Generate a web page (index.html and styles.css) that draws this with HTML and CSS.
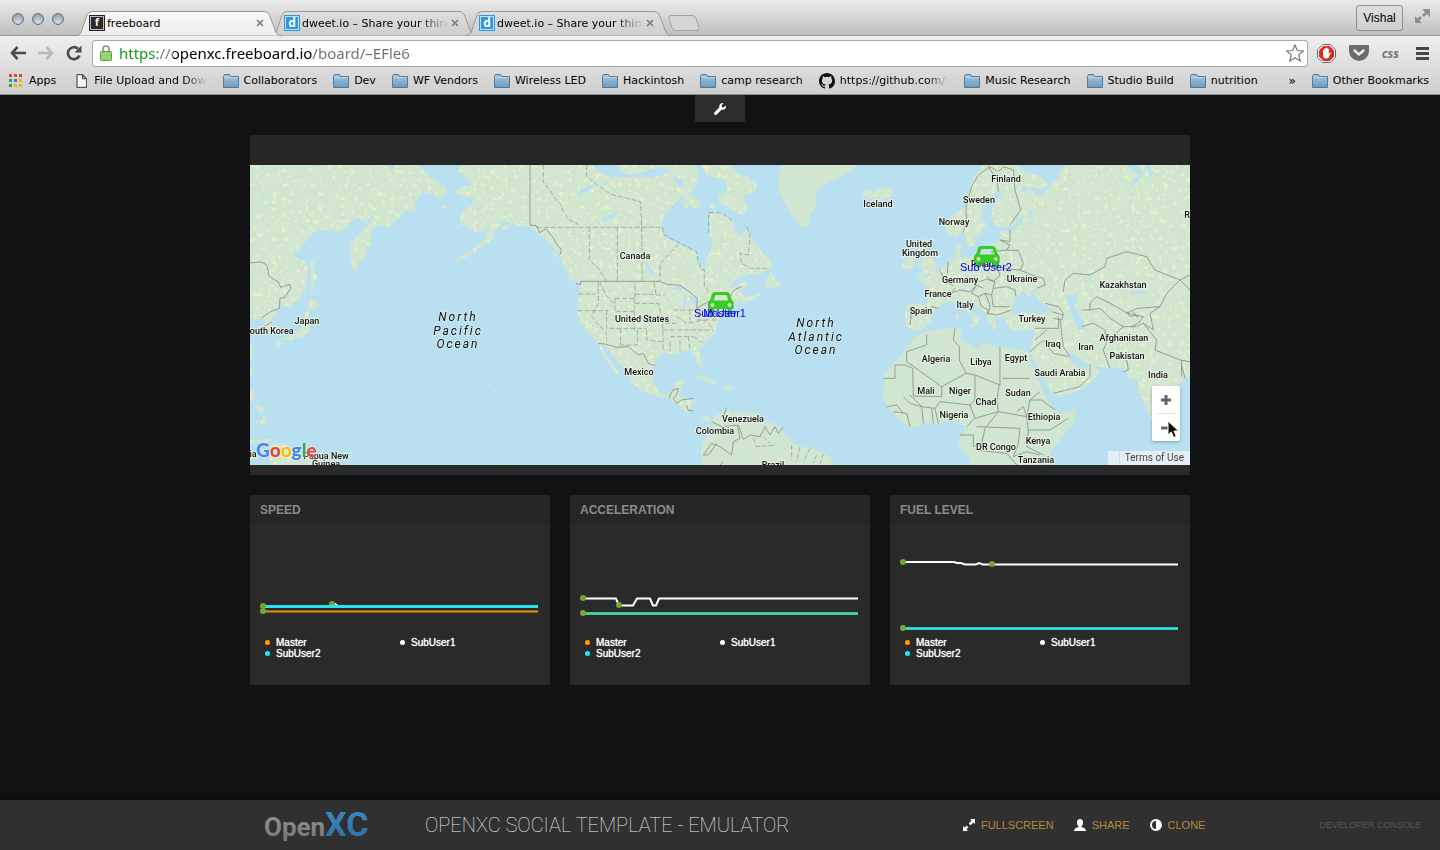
FILE: index.html
```html
<!DOCTYPE html>
<html lang="en">
<head>
<meta charset="utf-8">
<title>freeboard</title>
<link rel="stylesheet" href="styles.css">
</head>
<body>
<svg class="defs" width="0" height="0" aria-hidden="true">
  <defs>
    <linearGradient id="folderFill" x1="0" y1="0" x2="0" y2="1"><stop offset="0" stop-color="#a9c8de"/><stop offset="1" stop-color="#6c9cc0"/></linearGradient>
    <linearGradient id="tabActive" x1="0" y1="0" x2="0" y2="1"><stop offset="0" stop-color="#f7f7f7"/><stop offset="1" stop-color="#ededed"/></linearGradient>
    <linearGradient id="tabIdle" x1="0" y1="0" x2="0" y2="1"><stop offset="0" stop-color="#dedede"/><stop offset="1" stop-color="#cfcfcf"/></linearGradient>
    <linearGradient id="xcFill" x1="0" y1="0" x2="0" y2="1"><stop offset="0" stop-color="#3d8bc9"/><stop offset="1" stop-color="#2b6ca3"/></linearGradient>
    <linearGradient id="openFill" x1="0" y1="0" x2="0" y2="1"><stop offset="0" stop-color="#979797"/><stop offset="1" stop-color="#747474"/></linearGradient>
    <symbol id="folder" viewBox="0 0 16 14"><path d="M.5 2.5 1.5.5h5l1 2h8v11H.5z" fill="url(#folderFill)" stroke="#54799a"/><path d="M1 3.5h14" stroke="#bdd6e8"/></symbol>
    <symbol id="tabshape" viewBox="0 0 208 25"><path d="M0 24.500C5 24.500 6 22 7 19L12 4Q13.500.500 17 .500H189Q193 .500 194.500 4L200 19C201 22 202 24.500 207 24.500" stroke="#9a9a9a"/></symbol>
    <symbol id="close" viewBox="0 0 8 8"><path d="m1 1 6 6M7 1 1 7" stroke="#7b7b7b" stroke-width="1.600"/></symbol>
    <symbol id="car" viewBox="0 0 26 22"><path fill-rule="evenodd" d="M7 0h12q2 0 2.700 2l2 6q2 1 2 3v6h-2v3q0 2-2 2t-2-2v-3H6v3q0 2-2 2t-2-2v-3H0v-6q0-2 2-3l2-6q1-2 3-2zM7.300 3 5.700 8.500h14.600L18.700 3zM4.500 11a2 2 0 1 0 .1 0zm17 0a2 2 0 1 0 .1 0z" fill="#37cb25"/></symbol>
    <filter id="terrain" x="0" y="0" width="100%" height="100%" color-interpolation-filters="sRGB">
      <feTurbulence type="fractalNoise" baseFrequency="0.22" numOctaves="4" seed="8" result="n"/>
      <feColorMatrix in="n" type="matrix" values="0 0 0 0 .922  0 0 0 0 .933  0 0 0 0 .780  8 0 0 0 -4.700" result="s"/>
      <feComposite in="s" in2="SourceAlpha" operator="in" result="c"/>
      <feMerge><feMergeNode in="SourceGraphic"/><feMergeNode in="c"/></feMerge>
    </filter>
  </defs>
</svg>

<header class="browser">
  <div class="titlebar">
    <div class="lights"><i></i><i></i><i></i></div>
    <nav class="tabs">
      <div class="tab active">
        <svg class="shape"><use href="#tabshape" fill="url(#tabActive)"/></svg>
        <span class="fav dark">f</span><span class="tabname">freeboard</span>
        <button class="x" aria-label="Close tab"><svg width="8" height="8"><use href="#close"/></svg></button>
      </div>
      <div class="tab">
        <svg class="shape"><use href="#tabshape" fill="url(#tabIdle)"/></svg>
        <span class="fav">d</span><span class="tabname faded">dweet.io – Share your thing</span>
        <button class="x" aria-label="Close tab"><svg width="8" height="8"><use href="#close"/></svg></button>
      </div>
      <div class="tab">
        <svg class="shape"><use href="#tabshape" fill="url(#tabIdle)"/></svg>
        <span class="fav">d</span><span class="tabname faded">dweet.io – Share your thing</span>
        <button class="x" aria-label="Close tab"><svg width="8" height="8"><use href="#close"/></svg></button>
      </div>
      <button class="newtab" aria-label="New tab"><svg width="32" height="16" viewBox="0 0 32 16"><path d="M3 .500H24q3 0 4 3l3 9q1 3-2 3H8q-3 0-4-3L.800 3.500Q0 .500 3 .500z" fill="#d6d6d6" stroke="#a2a2a2"/></svg></button>
    </nav>
    <button class="user">Vishal</button>
    <button class="plain expand" aria-label="Full screen"><svg width="15" height="15" viewBox="0 0 15 15" fill="#8d8d8d"><path d="M7 0h8v8l-3-3-3 3-2-2 3-3zM0 7l2.500 2.500L5 7l2 2-2.500 2.500L7 14H0z"/></svg></button>
  </div>
  <div class="toolbar">
    <button class="plain" aria-label="Back"><svg width="16" height="14" viewBox="0 0 16 14" fill="none" stroke="#4b4b4b" stroke-width="2.600"><path d="M7.500 1 2 7l5.500 6M2 7h14"/></svg></button>
    <button class="plain" aria-label="Forward"><svg width="16" height="14" viewBox="0 0 16 14" fill="none" stroke="#b9b9b9" stroke-width="2.600"><path d="M8.500 1 14 7l-5.500 6M14 7H0"/></svg></button>
    <button class="plain" aria-label="Reload"><svg width="16" height="16" viewBox="0 0 16 16"><path d="M13.500 10.500A6 6 0 1 1 12 3.700" fill="none" stroke="#4b4b4b" stroke-width="2.600"/><path d="M15.500.500v7h-7z" fill="#4b4b4b"/></svg></button>
    <div class="omnibox">
      <svg width="12" height="16" viewBox="0 0 12 16"><path d="M3 8V4q0-3 3-3t3 3v4" fill="none" stroke="#8c8c8c" stroke-width="1.600"/><rect x=".5" y="6.500" width="11" height="9" rx="1" fill="#8fd06a" stroke="#5a9c3e"/><path d="M1 9h10M1 12h10" stroke="#aee08f"/></svg>
      <input class="url" type="text" aria-label="Address" value="https://openxc.freeboard.io/board/–EFle6">
      <button class="plain" aria-label="Bookmark"><svg width="18" height="18" viewBox="0 0 18 18"><path d="m9 1 2.300 5.500 6 .500-4.600 3.900L14.200 17 9 13.700 3.800 17l1.500-6.100L.700 7l6-.500z" fill="#fff" stroke="#777" stroke-width="1.200"/></svg></button>
    </div>
    <div class="extensions">
      <button class="plain" aria-label="Ad blocker"><svg width="19" height="19" viewBox="0 0 19 19"><path d="M5.800.500h7.400l5.300 5.300v7.400l-5.300 5.300H5.800L.500 13.200V5.800z" fill="#fff" stroke="#666"/><path d="M6.400 2h6.200L17 6.400v6.200L12.600 17H6.400L2 12.600V6.400z" fill="#e0281a"/><path d="M6 9V6q.7-1 1.400 0V4.500q.7-1 1.500 0V4q.8-.800 1.500 0v1q.8-.800 1.400 0v5l1-1.500q1-.300 1 .600L12 13q-1 1.500-3 1.500T6.300 13z" fill="#fff"/></svg></button>
      <button class="plain" aria-label="Pocket"><svg width="20" height="17" viewBox="0 0 20 17"><path d="M0 1q0-1 1-1h18q1 0 1 1v5a10 10 0 0 1-20 0z" fill="#6b6b6b"/><path d="m5.500 5.500 4.500 4 4.500-4" fill="none" stroke="#eee" stroke-width="2.400" stroke-linecap="round"/></svg></button>
      <button class="plain css">css</button>
      <button class="plain" aria-label="Menu"><svg width="13" height="13" viewBox="0 0 13 13"><path d="M0 1.500h13M0 6.500h13M0 11.500h13" stroke="#474747" stroke-width="3"/></svg></button>
    </div>
  </div>
  <nav class="bookmarks">
    <a href="#" class="apps"><svg width="13" height="13" viewBox="0 0 13 13"><path d="M0 0h3v3H0zM5 0h3v3H5zM10 0h3v3h-3z" fill="#ea4335"/><path d="M0 5h3v3H0zM0 10h3v3H0z" fill="#2da05a"/><path d="M5 5h3v3H5z" fill="#2f7de1"/><path d="M10 5h3v3h-3zM5 10h3v3H5zM10 10h3v3h-3z" fill="#f5b400"/></svg>Apps</a>
    <a href="#" class="page"><svg width="11" height="14" viewBox="0 0 11 14"><path d="M1 .700h5.500l4 4v8.600H1zM6.500.700v4h4" fill="#f6f6f6" stroke="#555" stroke-width="1.200"/></svg><span class="faded">File Upload and Dow</span></a>
    <a href="#"><svg width="16" height="14"><use href="#folder"/></svg>Collaborators</a>
    <a href="#"><svg width="16" height="14"><use href="#folder"/></svg>Dev</a>
    <a href="#"><svg width="16" height="14"><use href="#folder"/></svg>WF Vendors</a>
    <a href="#"><svg width="16" height="14"><use href="#folder"/></svg>Wireless LED</a>
    <a href="#"><svg width="16" height="14"><use href="#folder"/></svg>Hackintosh</a>
    <a href="#"><svg width="16" height="14"><use href="#folder"/></svg>camp research</a>
    <a href="#"><svg width="16" height="16" viewBox="0 0 16 16"><path fill="#111" d="M8 0C3.580 0 0 3.580 0 8c0 3.540 2.290 6.530 5.470 7.590.4.070.55-.170.550-.380 0-.190-.010-.820-.010-1.490-2.010.370-2.530-.490-2.690-.940-.090-.230-.480-.940-.820-1.130-.280-.150-.680-.520-.010-.530.630-.010 1.080.580 1.230.820.720 1.210 1.870.870 2.330.660.070-.520.280-.870.510-1.070-1.780-.200-3.640-.890-3.640-3.950 0-.870.310-1.590.820-2.150-.080-.200-.360-1.020.080-2.120 0 0 .670-.210 2.200.820a7.600 7.600 0 0 1 4 0c1.530-1.040 2.200-.820 2.200-.820.440 1.100.160 1.920.080 2.120.510.560.820 1.270.820 2.150 0 3.070-1.870 3.750-3.650 3.950.290.250.540.730.540 1.480 0 1.070-.010 1.930-.010 2.200 0 .210.150.460.550.380A8 8 0 0 0 16 8c0-4.420-3.580-8-8-8z"/></svg><span class="faded">https://github.com/i</span></a>
    <a href="#"><svg width="16" height="14"><use href="#folder"/></svg>Music Research</a>
    <a href="#"><svg width="16" height="14"><use href="#folder"/></svg>Studio Build</a>
    <a href="#"><svg width="16" height="14"><use href="#folder"/></svg>nutrition</a>
    <button class="plain more" aria-label="More bookmarks">»</button>
    <a href="#"><svg width="16" height="14"><use href="#folder"/></svg>Other Bookmarks</a>
  </nav>
</header>

<main class="board">
  <button class="settings" aria-label="Edit board"><svg width="12" height="12" viewBox="0 0 12 12"><path d="M0 9.700 5.300 4.500Q4.800 2 6.500.700 8 -.300 9.600.200L7.600 2.300l.4 1.700 1.700.400 2-2q.7 1.700-.4 3.200-1.400 1.600-3.800 1.100L2.300 12Q1.500 12.300.600 11.400-.300 10.500 0 9.700z" fill="#fff"/></svg></button>

  <section class="panel mappanel">
    <div class="panelhead"></div>
    <div class="map">
      <svg class="world" viewBox="0 0 940 300" preserveAspectRatio="xMidYMid slice" role="img" aria-label="World map">
        <g class="land" filter="url(#terrain)">
          <g transform="translate(0 -35) scale(.33333)">
            <path d="M0 100H498L520 118 545 145 562 155 585 168 592 182 570 208 545 190 530 192 515 175 508 202 495 214 500 247 470 240 430 278 417 292 400 284 376 290 365 310 362 345 350 352 348 382 325 397 318 423 308 420 300 370 300 340 320 318 345 295 365 270 375 245 350 275 338 275 328 260 300 275 275 308 240 298 190 305 170 330 150 355 130 370 135 385 160 390 172 410 170 460 160 490 140 515 110 530 95 528 75 545 84 553 60 572 68 600 52 612 45 590 45 570 30 565 10 575 0 555z"/>
            <path d="M180 395 192 395 195 430 203 445 190 450 190 485 182 485 183 440zM180 500 195 512 211 522 195 530 190 540 172 536 180 520zM165 540 178 547 175 575 180 598 165 617 130 628 100 633 95 625 135 612 155 592 162 570zM80 630 96 635 90 652 82 652zM0 640 10 655 5 685 0 690zM0 715 12 712 3 740 0 742zM0 775 10 778 16 800 6 815 0 812zM10 822 22 824 38 830 42 845 30 848 18 835zM15 868 30 872 42 855 50 880 36 886 28 875 18 880zM0 930 65 928 60 935 0 940zM60 940 100 942 140 962 175 978 195 1010H60zM575 228 600 230 592 237 580 234zM616 287 630 286 625 295zM712 760 722 765 715 771z"/>
            <path d="M844 100H636L625 125 650 145 662 165 645 170 632 174 610 186 620 192 645 200 655 207 668 202 670 225 640 240 630 260 636 286 655 290 665 305 690 305 715 297 708 322 680 350 640 376 613 393 617 397 650 380 700 348 727 326 735 305 752 280 765 272 780 278 775 295 757 300 753 290 790 278 805 288 844 292z"/>
          </g>
          <g transform="translate(280 -5) scale(.33333)">
            <path d="M0 10H482L505 30 500 60 490 90 455 110 430 135 402 165 395 205 400 225 430 245 470 265 500 275 503 300 515 325 526 325 530 290 545 265 548 235 533 225 540 195 535 160 575 158 610 185 615 215 635 228 650 200 665 235 690 265 705 285 722 300 726 325 690 342 650 345 620 355 600 385 622 375 645 365 657 368 640 385 635 400 650 412 690 400 685 412 650 425 640 432 630 420 615 434 598 436 588 442 573 465 565 485 562 500 553 520 540 537 520 555 505 570 512 590 520 612 513 622 500 605 495 582 480 572 450 574 440 585 400 578 375 600 368 630 370 665 385 695 410 705 425 695 435 665 460 660 455 685 445 710 480 715 492 725 475 750 480 768 500 778 530 768 547 782 538 790 520 780 495 776 465 755 440 730 415 715 385 710 330 690 305 670 300 650 280 620 255 595 230 555 216 555 225 580 245 605 268 640 260 642 235 610 222 590 208 560 200 545 165 510 155 490 142 460 145 420 150 375 120 350 100 315 88 280 60 250 30 220 0 202z"/>
            <path d="M515 10H600L622 40 650 50 682 75 672 98 640 108 652 140 638 166 600 145 575 132 560 110 592 92 588 62 540 50 518 30zM458 98 490 106 515 128 500 152 478 138 462 148zM540 130 555 133 552 145 540 142zM722 335 735 355 750 372 750 390 735 380 702 385 712 355zM485 650 510 645 540 655 562 672 535 668 510 655zM576 680 592 674 616 685 590 690zM540 685 552 686 545 690zM628 683 640 684 635 688zM72 270 82 280 80 298 70 285zM110 335 150 362 148 375 120 355z"/>
          </g>
          <g transform="translate(610 -5) scale(.33333)">
            <path d="M1000 10H372L345 45 330 80 318 140 270 170 255 190 262 220 288 232 308 215 318 230 324 262 345 255 345 235 365 220 378 190 363 170 370 135 395 110 418 88 422 108 398 140 395 170 408 200 440 203 490 185 460 210 415 217 422 240 395 250 395 275 350 285 320 292 302 292 300 265 305 245 285 255 287 290 265 305 240 330 200 350 172 350 182 365 207 385 205 415 200 435 145 430 135 450 138 495 165 514 190 505 212 485 218 460 240 435 265 425 290 428 310 445 335 470 342 490 322 498 340 505 352 490 357 475 325 450 313 428 325 415 350 440 375 460 385 485 400 512 412 500 405 475 432 468 440 490 455 512 490 510 525 507 520 540 508 575 525 605 555 660 578 705 600 710 660 690 700 660 720 635 695 610 680 625 655 625 632 600 622 583 640 580 665 600 700 615 740 622 790 625 800 640 815 662 832 655 835 690 872 778 880 780 905 740 940 690 975 655 1000 650z"/>
            <path d="M180 238 200 238 195 265 215 290 232 320 222 340 175 347 190 330 175 315 190 295 175 270zM135 290 160 288 166 315 145 332 125 325zM20 90 40 95 60 85 90 80 98 100 85 115 50 125 20 115 5 100zM285 462 295 462 296 482 287 482zM287 440 294 440 293 455zM405 525 435 526 420 531zM490 527 508 522 497 533zM150 160 160 165 152 166z"/>
          </g>
        </g>
        <g class="land">
          <path transform="translate(280 -5) scale(.33333)" d="M757 10 745 60 750 100 780 160 808 198 832 203 840 165 856 140 860 95 890 70 935 50 990 10z"/>
          <path transform="translate(280 -5) scale(.33333)" d="M545 775 565 762 592 742 600 755 640 758 680 760 700 780 740 795 765 820 788 850 840 865 880 878 907 898 905 920H520L512 880 520 845 540 820 547 795z"/>
          <path transform="translate(610 -5) scale(.33333)" d="M195 515 285 503 305 510 300 535 350 565 372 550 425 560 490 572 505 575 515 612 538 665 560 715 585 748 600 760 650 745 640 790 600 840 568 880 555 920H335L325 890 295 860 300 830 320 800 290 790 270 775 235 792 200 790 150 806 120 780 90 750 66 710 75 680 70 650 110 600 130 575 165 530z"/>
        </g>
        <g class="lakes">
          <g transform="translate(0 -35) scale(.33333)"><path d="M400 105H440L425 118zM180 104H215L205 110z"/><path class="river" d="M25 160Q30 200 75 232"/></g>
          <g transform="translate(280 -5) scale(.33333)"><path d="M185 15 260 15 290 45 330 40 395 20 420 35 380 50 310 52 240 50 205 35zM430 50 460 60 455 90 440 70zM140 95 165 85 190 70 197 75 170 95 150 108zM212 180 235 165 270 152 250 170 220 186zM345 305 360 318 378 345 365 345 350 325zM425 385 450 375 475 385 450 393 430 388zM460 410 470 402 465 448 457 445zM478 405 500 415 498 432 485 430zM500 450 520 440 505 455zM520 436 535 430 530 438zM325 190 340 195 330 200zM215 60 235 70 225 75z"/></g>
          <g transform="translate(610 -5) scale(.33333)"><path d="M470 10H625L605 30 590 60 566 82 545 108 525 103 515 85 480 95 488 78 545 88 566 72 540 48 500 38 478 25zM800 10H830L850 35 835 65 812 80 820 60 840 45 815 30zM855 10 870 10 878 55 870 50zM455 445 470 408 490 392 505 410 520 400 540 425 577 450 540 462 490 455 460 467zM505 395 535 388 520 402zM620 408 650 400 652 420 642 440 667 478 675 505 655 512 642 482 630 455zM685 408 705 405 700 415zM465 170 490 175 485 195 470 190zM505 150 515 150 520 175 508 170zM800 395 850 393 870 400 820 403z"/></g>
        </g>
        <g class="borders">
          <g transform="translate(0 -35) scale(.33333)"><path d="M0 398H15Q40 390 52 410L58 440 85 456 92 472 120 463 122 475 105 502 90 505 88 535 62 545 32 565M45 588 66 576"/><path class="sea" d="M595 105 602 150 600 190 560 225 500 290 423 400 508 468V948H680V910H653V880H712L762 1005"/></g>
          <g transform="translate(280 -5) scale(.33333)">
            <path d="M0 10V196H18L30 218 48 206 70 235 85 260 94 268 90 285M138 370 152 375V364H390L410 373 450 376 478 395 502 415 500 445 535 425M600 410 612 390 635 380M205 550 230 553 260 562 295 560 325 585 340 580 355 610 375 617M417 715 428 690 445 685 440 705 430 715 440 730 455 720 490 715M470 735 475 752 490 752M580 770 590 742M545 785 575 800 622 795 630 835 610 845 605 885 570 860 545 850 520 885M625 795 640 838 660 825 690 830 705 800 720 825 735 800 745 820 760 800M570 915 580 905M520 885 535 885 560 850"/>
            <path class="state" d="M40 15V68L60 90 75 115 90 130 100 155 120 182 140 188 145 202M20 202H397M170 15V50L240 102 332 125 335 202M178 202V300L205 325 230 364M262 202V364M335 202 337 364M445 252 390 312V364M397 202 402 225 500 275 503 300 515 328 523 330V375L535 395M536 220V158H575L610 185M650 200 660 225 655 285 630 280 635 310 660 325H715M205 366V430L185 470 230 520V545M145 402H195M143 452H235M210 366 228 405 255 435M255 415H315V366M315 403H378L372 366M255 415V455H315M313 415V510M230 450V505H350M272 505V558M322 510V555H275M315 430H385L395 470M313 475H398M350 510V540L400 545M398 510H550M397 470 400 575M378 405H405M405 490H440M420 545V575M450 540V573M475 530 480 570M420 530H490M440 470 470 490 520 480 550 505M505 455V480H560M480 450V480M530 450 560 452M490 530 520 550M430 450H500M785 855V900M810 860 800 905M840 865 820 905M860 885 850 910M880 880 870 912M670 835 680 860 740 855M700 830 720 850"/>
          </g>
          <g transform="translate(610 -5) scale(.33333)">
            <path d="M318 140 335 80 355 45 390 20 415 35 430 20 460 30 465 90 482 150 450 195M415 95 412 60 385 20M318 140 320 190 308 218M150 495 155 455 145 450M212 440 235 445M240 330 255 365 280 378M265 305 262 340M285 385 270 400 300 390 330 395 350 375 370 385M320 350 355 365 380 358 405 365M395 275 410 320 420 345 400 365 380 350M395 275 440 270 450 255 420 240 450 245 450 210M440 270 475 272 490 310 480 330 425 325M405 365 400 385 440 380 465 390 468 410M350 375 335 400 355 410 375 400 395 405 400 385M355 410 365 440 385 450 380 465M375 400 390 435 385 460 410 465 440 455 455 450M395 405 400 440 450 440M480 330 515 345 550 355 555 375 530 385M555 430 595 440 610 460 605 480 580 475M575 455 610 465M610 395 615 360 640 340 690 345 735 320 740 295 800 275 860 290 885 330 960 360 920 400 900 440 830 445 800 460 770 440 710 410 690 430V450H665M690 450 720 445 750 475 790 500M665 500 700 490 735 510 740 545 730 570 740 600 750 625M600 480 610 560 630 590M525 505H595V470M525 540 560 510M510 575 550 540 580 580 625 590M740 545 790 500 830 500 850 490M750 580 800 600 805 630 790 635M800 460 850 470 835 490 815 500M850 490 890 540 885 570 960 600 990 605M900 440 870 460 880 510 850 490M960 360 990 390M960 360 990 345M580 700 660 680 690 650 690 615M965 600V650M975 655 965 615"/>
            <path d="M285 505 280 540 298 560V600L318 640 345 645 420 675V560M428 655H510M200 525V555L140 575 140 605 245 680 318 640M245 680V710L160 708 158 625 135 615H105V655H70M345 645V720L330 735 240 725 225 745 185 740 150 705M418 675 410 720 415 755 500 770 510 720 540 695M330 735 345 775 320 800M345 775 415 755M375 805 415 755M510 720 545 720 585 750M500 770 505 810 570 810 625 775M350 800 480 805 475 850 460 890M300 825H340V860L365 850 375 805M460 890 500 875 540 885M505 810 500 860 550 885M345 870 440 880 470 915M80 740 110 735 130 760M100 755 140 760 150 800M185 740 190 790M215 745 220 790M225 745 235 790M130 710 150 730 185 740M470 755 490 740 500 770M800 455 810 470 830 465M820 455 835 475"/>
          </g>
        </g>
        <g class="places">
          <text x="756" y="17">Finland</text><text x="729" y="38">Sweden</text><text x="628" y="42">Iceland</text><text x="704" y="60">Norway</text>
          <text x="669" y="82">United</text><text x="670" y="91">Kingdom</text><text x="735" y="102">Poland</text>
          <text x="710" y="118">Germany</text><text x="772" y="117">Ukraine</text><text x="688" y="132">France</text><text x="715" y="143">Italy</text><text x="671" y="149">Spain</text>
          <text x="782" y="157">Turkey</text><text x="873" y="123">Kazakhstan</text><text x="803" y="182">Iraq</text><text x="836" y="185">Iran</text><text x="874" y="176">Afghanistan</text><text x="877" y="194">Pakistan</text>
          <text x="686" y="197">Algeria</text><text x="731" y="200">Libya</text><text x="766" y="196">Egypt</text><text x="810" y="211">Saudi Arabia</text><text x="908" y="213">India</text>
          <text x="676" y="229">Mali</text><text x="710" y="229">Niger</text><text x="736" y="240">Chad</text><text x="768" y="231">Sudan</text><text x="704" y="253">Nigeria</text><text x="794" y="255">Ethiopia</text>
          <text x="746" y="285">DR Congo</text><text x="788" y="279">Kenya</text><text x="786" y="298">Tanzania</text><text x="937" y="53">R</text>
          <text x="385" y="94">Canada</text><text x="392" y="157">United States</text><text x="389" y="210">Mexico</text><text x="493" y="257">Venezuela</text><text x="465" y="269">Colombia</text><text x="523" y="303">Brazil</text>
          <text x="57" y="159">Japan</text><text x="19" y="169">South Korea</text><text x="3" y="292">ia</text><text x="76" y="294">Papua New</text><text x="76" y="302">Guinea</text>
        </g>
        <g class="oceans">
          <text x="208" y="156">North</text><text x="208" y="170">Pacific</text><text x="208" y="183">Ocean</text>
          <text x="566" y="162">North</text><text x="566" y="176">Atlantic</text><text x="566" y="189">Ocean</text>
        </g>
        <g class="pins">
          <use href="#car" x="458" y="127" width="26" height="22"/><text x="470" y="152">Sub User1</text><text x="470" y="152">Master</text>
          <use href="#car" x="724" y="81" width="26" height="22"/><text x="736" y="106">Sub User2</text>
        </g>
      </svg>
      <span class="google"><b>G</b><b>o</b><b>o</b><b>g</b><b>l</b><b>e</b></span>
      <div class="zoomctl">
        <button aria-label="Zoom in"><svg width="10" height="10"><path d="M5 0v10M0 5h10" stroke="#666" stroke-width="3"/></svg></button>
        <button aria-label="Zoom out"><svg width="10" height="10"><path d="M0 5h10" stroke="#666" stroke-width="3"/></svg></button>
      </div>
      <div class="terms"><a href="#">Terms of Use</a></div>
      <svg class="cursor" width="13" height="19" viewBox="0 0 13 19"><path d="M1 1v14l3.300-3 2.400 5.500 2.600-1.100L7 11h4.600z" fill="#111" stroke="#fff"/></svg>
    </div>
  </section>

  <section class="panel">
    <h2 class="panelhead">SPEED</h2>
    <svg class="chart" viewBox="0 0 300 110">
      <path d="M13 86.500H288" stroke="#e8920c"/><path d="M82 79H85L88 81" stroke="#fff"/><circle cx="82" cy="79" r="3" fill="#76a733"/><path d="M13 81.500H288" stroke="#22e6ef" class="thick"/>
      <g><circle cx="13" cy="81" r="3"/><circle cx="13" cy="86" r="3"/></g>
    </svg>
    <ul class="legend"><li class="m">Master</li><li class="s1">SubUser1</li><li class="s2">SubUser2</li></ul>
  </section>
  <section class="panel">
    <h2 class="panelhead">ACCELERATION</h2>
    <svg class="chart" viewBox="0 0 300 110">
      <path d="M13 73.500H46L49 80.500H63L67 73.500H80L83 80.500H86L89 73.500H288" stroke="#fff"/><path d="M13 88.500H288" stroke="#7a9a5a" class="thick"/><path d="M13 88.500H288" stroke="#2fe0b4"/>
      <g><circle cx="13" cy="73" r="3"/><circle cx="49" cy="80" r="3"/><circle cx="13" cy="88" r="3"/></g>
    </svg>
    <ul class="legend"><li class="m">Master</li><li class="s1">SubUser1</li><li class="s2">SubUser2</li></ul>
  </section>
  <section class="panel">
    <h2 class="panelhead">FUEL LEVEL</h2>
    <svg class="chart" viewBox="0 0 300 110">
      <path d="M13 37H64L67 38H71L75 39.500H86L89 38 93 39.500H288" stroke="#fff"/><path d="M13 103.500H288" stroke="#5f9a80" class="thick"/><path d="M13 103.500H288" stroke="#10f0f4"/>
      <g><circle cx="13" cy="37" r="3"/><circle cx="102" cy="39" r="3"/><circle cx="13" cy="103" r="3"/></g>
    </svg>
    <ul class="legend"><li class="m">Master</li><li class="s1">SubUser1</li><li class="s2">SubUser2</li></ul>
  </section>
</main>

<footer class="footer">
  <svg class="logo" width="110" height="36" viewBox="0 0 110 36" role="img" aria-label="OpenXC"><text class="lo" x="0" y="29" fill="url(#openFill)">Open</text><text class="lx" x="61" y="29" fill="url(#xcFill)">XC</text></svg>
  <h1>OPENXC SOCIAL TEMPLATE - EMULATOR</h1>
  <nav class="actions">
    <a href="#"><svg width="12" height="12" viewBox="0 0 12 12" fill="#fff"><path d="M7 0h5v5l-1.600-1.600-2.800 2.800-1.800-1.800 2.800-2.800zM0 12V7l1.600 1.600 2-2 1.800 1.800-2 2L5 12z"/></svg>FULLSCREEN</a>
    <a href="#"><svg width="12" height="12" viewBox="0 0 12 12" fill="#fff"><path d="M6 0q3 0 3 3.500Q9 6 7.500 7.200v.800Q12 9 12 12H0q0-3 4.500-4v-.800Q3 6 3 3.500 3 0 6 0z"/></svg>SHARE</a>
    <a href="#"><svg width="12" height="12" viewBox="0 0 12 12"><circle cx="6" cy="6" r="5" fill="none" stroke="#fff" stroke-width="2"/><path d="M6 1a5 5 0 0 1 0 10z" fill="#fff"/></svg>CLONE</a>
  </nav>
  <a href="#" class="console">DEVELOPER CONSOLE</a>
</footer>
</body>
</html>
```
FILE: styles.css
```css
* { box-sizing: border-box; }
body {
  margin: 0;
  min-height: 100vh;
  display: flex;
  flex-direction: column;
  background: #101214;
  font-family: "Liberation Sans", Arial, sans-serif;
}
svg { display: block; flex: none; }
.defs { position: absolute; }
button { font: inherit; cursor: pointer; }
a { text-decoration: none; color: inherit; }
.plain { border: 0; padding: 0; background: none; }

/* browser window */
.browser {
  height: 95px;
  background: linear-gradient(#efefef 36px, #cecece);
  border-bottom: 1px solid #8c8c8c;
  font-family: "DejaVu Sans", sans-serif;
  font-size: 11px;
  color: #000;
}
.titlebar {
  height: 36px;
  display: flex;
  align-items: center;
  padding: 0 10px 0 12px;
  background: linear-gradient(#ebebeb, #bfbfbf);
  border-bottom: 1px solid #9a9a9a;
}
.lights { display: flex; gap: 8px; width: 66px; padding-top: 2px; }
.lights i {
  width: 12px;
  height: 12px;
  border-radius: 50%;
  border: 1px solid #66707c;
  background: radial-gradient(circle at 50% 80%, #d5dde6, #8793a1);
}
.tabs { display: flex; align-self: stretch; align-items: flex-end; flex: 1; }
.tab {
  position: relative;
  width: 195px;
  height: 24px;
  display: flex;
  align-items: center;
  gap: 2px;
  padding: 0 9px 0 11px;
}
.tab.active { z-index: 1; }
.shape { position: absolute; left: -3px; top: 0; width: 208px; height: 25px; }
.fav {
  position: relative;
  width: 16px;
  height: 16px;
  flex: none;
  background: #2f97de;
  border: 1px solid #2f97de;
  outline: 1px solid #bfe2f8;
  outline-offset: -2px;
  color: #fff;
  font: bold 12px/13px "Open Sans", sans-serif;
  text-align: center;
}
.fav.dark { background: #2b2b2b; border-color: #222; outline-color: #bbb; font-size: 10px; }
.tabname { position: relative; flex: 1; overflow: hidden; white-space: nowrap; }
.faded { -webkit-mask-image: linear-gradient(90deg, #000 80%, transparent); mask-image: linear-gradient(90deg, #000 80%, transparent); }
.x { position: relative; border: 0; padding: 0; background: none; }
.newtab { border: 0; padding: 0; background: none; margin: 0 0 4px 5px; }
.user {
  width: 47px;
  height: 26px;
  padding: 0;
  border: 1px solid #909090;
  border-radius: 3px;
  background: linear-gradient(#dedede, #cfcfcf);
  font: 12px "Liberation Sans", Arial, sans-serif;
}
.expand { margin: 0 0 2px 12px; }
.toolbar { height: 34px; display: flex; align-items: center; gap: 12px; padding: 0 11px 0 10px; }
.omnibox {
  flex: 1;
  height: 27px;
  display: flex;
  align-items: center;
  gap: 7px;
  margin-left: -2px;
  padding: 0 3px 0 7px;
  background: #fff;
  border: 1px solid #a8a8a8;
  border-radius: 3px;
}
.url {
  flex: 1;
  min-width: 0;
  height: 24px;
  padding: 0;
  border: 0;
  outline: 0;
  font: 15px "Noto Sans", sans-serif;
  color: transparent;
  background: linear-gradient(90deg, #0b9a0b 38px, #777 38px, #777 54px, #000 54px, #000 193px, #6e6e6e 193px);
  -webkit-background-clip: text;
  background-clip: text;
}
.extensions { display: flex; align-items: center; gap: 13px; margin-left: -3px; }
.css { margin-right: 4px; font: bold italic 12px "Noto Sans", sans-serif; color: #777; }
.bookmarks { height: 21px; display: flex; align-items: center; gap: 16px; padding: 0 11px 0 9px; white-space: nowrap; }
.bookmarks a { display: flex; align-items: center; gap: 5px; }
.bookmarks .apps, .bookmarks .page { gap: 7px; }
.bookmarks .page { margin-left: 4px; }
.more { margin-left: auto; font-size: 12px; }

/* dashboard */
.board {
  flex: 1;
  width: 100%;
  max-width: 940px;
  margin: 0 auto;
  display: grid;
  grid-template-columns: repeat(3, 1fr);
  align-content: start;
  column-gap: 20px;
}
.settings {
  grid-column: 1 / -1;
  justify-self: center;
  width: 50px;
  height: 27px;
  margin-bottom: 13px;
  display: grid;
  place-items: center;
  border: 0;
  background: #2d2d2d;
}
.panel { background: #2a2a2a; padding-bottom: 26px; }
.mappanel { grid-column: 1 / -1; margin-bottom: 20px; padding-bottom: 10px; }
.panelhead {
  height: 30px;
  margin: 0;
  padding: 0 10px;
  background: #262626;
  color: #8b8b8b;
  font-size: 12px;
  font-weight: bold;
  line-height: 30px;
}
.map { position: relative; height: 300px; overflow: hidden; background: #b9e0f0; }
.world { width: 100%; height: 300px; }
.land { fill: #d1e6d0; }
.lakes { fill: #b9e0f0; }
.lakes .river { fill: none; stroke: #b9e0f0; stroke-width: 3; }
.borders { fill: none; stroke: #858c88; }
.borders path { vector-effect: non-scaling-stroke; stroke-width: 1px; stroke-opacity: .8; }
.borders .state { stroke-dasharray: 5 2; stroke-opacity: .6; }
.borders .sea { stroke: #d1e6d0; stroke-dasharray: 4 2; stroke-opacity: .5; }
.places, .oceans {
  font: 500 9px Roboto, sans-serif;
  fill: #111;
  stroke: #eef5ea;
  stroke-width: 2px;
  stroke-opacity: .8;
  paint-order: stroke;
  text-anchor: middle;
}
.oceans { font: italic 400 12px Roboto, sans-serif; letter-spacing: 2px; stroke: #cfe9f4; }
.pins { font-size: 11px; fill: #0000f0; text-anchor: middle; }
.google {
  position: absolute;
  left: 6px;
  bottom: 2px;
  font: 700 19px/26px Lato, sans-serif;
  text-shadow: 0 0 2px #fff;
}
.google b { color: #4285f4; }
.google b:nth-child(2), .google b:nth-child(6) { color: #ea4335; }
.google b:nth-child(3) { color: #fbbc05; }
.google b:nth-child(5) { color: #34a853; }
.zoomctl {
  position: absolute;
  right: 10px;
  bottom: 24px;
  width: 28px;
  padding: 0 4px;
  background: #fff;
  border-radius: 2px;
  box-shadow: 0 1px 3px rgba(0, 0, 0, .3);
}
.zoomctl button {
  width: 20px;
  height: 27px;
  padding: 0;
  display: grid;
  place-items: center;
  border: 0;
  background: none;
}
.zoomctl button + button { height: 28px; border-top: 1px solid #e3e3e3; }
.terms {
  position: absolute;
  right: 0;
  bottom: 0;
  display: flex;
  gap: 1px;
  font: 10px/14px Roboto, sans-serif;
  color: #444;
}
.terms::before { content: ""; width: 11px; background: rgba(245, 245, 245, .7); }
.terms a { padding: 0 6px 0 5px; background: rgba(245, 245, 245, .7); }
.cursor { position: absolute; right: 10px; bottom: 26px; }
.chart { width: 100%; fill: none; stroke-width: 2; }
.chart .thick { stroke-width: 3; }
.chart circle { stroke: none; }
.chart g { fill: #76a733; }
.legend {
  list-style: none;
  margin: 0;
  padding: 2px 15px 0;
  display: grid;
  grid-template-columns: repeat(2, 1fr);
  color: #fff;
  font-size: 10px;
  line-height: 11px;
  text-shadow: 0 0 1px #fff;
}
.legend li { display: flex; align-items: center; gap: 6px; }
.legend li::before { content: ""; width: 5px; height: 5px; border-radius: 50%; background: currentColor; }
.legend .m::before { color: #ff9900; }
.legend .s2::before { color: #15f0f5; }

/* footer */
.footer {
  height: 50px;
  display: flex;
  align-items: center;
  padding: 0 19px 0 calc((100% - 940px) / 2 + 14px);
  background: #303030;
  box-shadow: 0 -2px 3px rgba(0, 0, 0, .5);
  white-space: nowrap;
}
.logo { font-family: Roboto, sans-serif; font-weight: 700; }
.lo { font-size: 26px; }
.lx { font-size: 34px; }
.footer h1 { margin: 0 0 0 51px; color: #eee; font: 100 20px Roboto, sans-serif; }
.actions { display: flex; gap: 20px; margin-left: auto; color: #b58a3c; font-size: 11px; }
.actions a { display: flex; align-items: center; gap: 6px; }
.console { margin-left: 114px; color: #565656; font-size: 9px; }
```
